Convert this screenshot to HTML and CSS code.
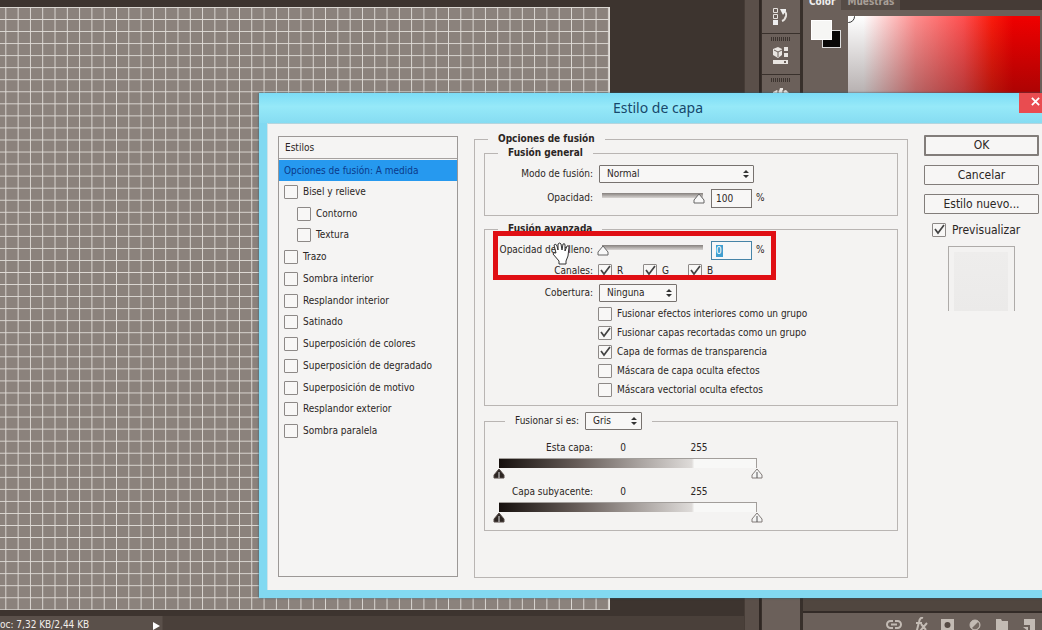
FILE: index.html
```html
<!DOCTYPE html>
<html lang="es">
<head>
<meta charset="utf-8">
<title>Estilo de capa</title>
<link rel="stylesheet" href="styles.css">
</head>
<body>
<div class="app">
  <main class="workspace">
    <div class="stage"><div class="canvas"></div></div>
    <footer class="status"><span class="doc-size">oc: 7,32 KB/2,44 KB</span><span class="play"></span></footer>
  </main>
  <div class="scrollbar"></div>
  <nav class="dock">
    <button class="dock-cell" aria-label="Historia">
      <svg width="18" height="20" viewBox="0 0 18 20"><g fill="none" stroke="#e6e2de"><path d="M1.500 2.500h4v4h-4zM1.500 8.500h4v4h-4z"/><path d="M10 5q5 0 4 5-1 4-4 5" stroke-width="2"/></g><path d="M1 14h5v5H1zM8 3h6v2l-3 4z" fill="#eee"/></svg>
    </button>
    <button class="dock-cell" aria-label="Propiedades">
      <svg width="18" height="20" viewBox="0 0 18 20"><path d="M1 4l5-2 4 2v6l-4 3-5-3z" fill="#e9e5e1"/><path d="M2 5l4 2 4-2M6 7v5" stroke="#6b605a" fill="none"/><path d="M12 2h4v4h-4zM12 8h4v4h-4zM1 15h15v4H1z" fill="#e9e5e1"/><path d="M12 16h2v2h-2z" fill="#6b605a"/></svg>
    </button>
    <button class="dock-cell" aria-label="Pinceles">
      <svg width="18" height="20" viewBox="0 0 18 20"><path d="M1 6l4-2 2 1 1-3h3v3l3-1 3 3v8H1z" fill="#e9e5e1"/><path d="M6 4v6M11 4v6" stroke="#6b605a"/></svg>
    </button>
  </nav>
  <aside class="panels">
    <div class="tabs"><button class="tab tab-on">Color</button><button class="tab">Muestras</button></div>
    <div class="color-body">
      <div class="swatches"><span class="swatch back"></span><span class="swatch front"></span></div>
      <div class="ramp"><span class="picker"></span></div>
    </div>
    <div class="layers"></div>
    <div class="layer-tools">
      <svg width="16" height="16" viewBox="0 0 16 16"><path d="M7 4H4.500a3.500 3.500 0 0 0 0 7H7M9 4h2.500a3.500 3.500 0 0 1 0 7H9M5 7.500h6" fill="none" stroke="#c3bbb4" stroke-width="2"/></svg>
      <svg width="16" height="16" viewBox="0 0 16 16"><path d="M10 1Q7 0 6 5L4 13q-1 2-3 1M3 6h6M8 7l5 6M14 6l-7 8" fill="none" stroke="#c3bbb4" stroke-width="2"/></svg>
      <svg width="16" height="16" viewBox="0 0 16 16"><path d="M1 2h13v12H1z" fill="#c3bbb4"/><circle cx="7.500" cy="8" r="3" fill="#554a44"/></svg>
      <svg width="16" height="16" viewBox="0 0 16 16"><circle cx="8" cy="8" r="5" fill="#c3bbb4" stroke="#c3bbb4"/><path d="M5 11A4 4 0 0 0 11 5z" fill="#756a63"/></svg>
      <svg width="16" height="16" viewBox="0 0 16 16"><path d="M2 2h5l1 2h6v10H2z" fill="#c3bbb4"/></svg>
      <svg width="16" height="16" viewBox="0 0 16 16"><path d="M3 2h11v12H9V8H3z" fill="#c3bbb4"/><path d="M2 10h5v4z" fill="#c3bbb4"/></svg>
    </div>
  </aside>
</div>

<section class="dialog" role="dialog" aria-labelledby="dlg-title">
  <header class="titlebar">
    <h1 id="dlg-title">Estilo de capa</h1>
    <button class="close" aria-label="Cerrar"><svg width="9" height="9" viewBox="0 0 10 10"><path d="M1 1l8 8M9 1L1 9" stroke="#fff" stroke-width="2"/></svg></button>
  </header>
  <div class="dialog-body">
    <div class="styles">
      <h2 class="styles-head">Estilos</h2>
      <button class="selected">Opciones de fusión: A medida</button>
      <div class="style-list">
        <label><input type="checkbox">Bisel y relieve</label>
        <label class="sub"><input type="checkbox">Contorno</label>
        <label class="sub"><input type="checkbox">Textura</label>
        <label><input type="checkbox">Trazo</label>
        <label><input type="checkbox">Sombra interior</label>
        <label><input type="checkbox">Resplandor interior</label>
        <label><input type="checkbox">Satinado</label>
        <label><input type="checkbox">Superposición de colores</label>
        <label><input type="checkbox">Superposición de degradado</label>
        <label><input type="checkbox">Superposición de motivo</label>
        <label><input type="checkbox">Resplandor exterior</label>
        <label><input type="checkbox">Sombra paralela</label>
      </div>
    </div>

    <fieldset class="options">
      <legend>Opciones de fusión</legend>
      <fieldset class="group general">
        <legend>Fusión general</legend>
        <div class="row mode-row">
          <label class="name" for="mode">Modo de fusión:</label>
          <select id="mode" class="wide"><option>Normal</option></select>
        </div>
        <div class="row">
          <label class="name" for="opacity">Opacidad:</label>
          <input id="opacity" type="range" value="100">
          <input class="num" type="text" value="100" aria-label="Opacidad en porcentaje"><span>%</span>
        </div>
      </fieldset>

      <fieldset class="group advanced">
        <legend>Fusión avanzada</legend>
        <div class="fill-block">
          <div class="row fill-row">
            <label class="name" for="fill">Opacidad de relleno:</label>
            <input id="fill" type="range" value="0">
            <input class="num active" type="text" value="0" aria-label="Relleno en porcentaje"><span>%</span>
          </div>
          <div class="row channels">
            <span class="name">Canales:</span>
            <label><input type="checkbox" checked>R</label>
            <label><input type="checkbox" checked>G</label>
            <label><input type="checkbox" checked>B</label>
          </div>
          <svg class="hand" width="22" height="24" viewBox="0 0 22 24"><path d="M3 4q2-2 3 1l1 4V3q2-2 3 0l1 6 1-6q2-1 2 1v6l2-5q2-1 2 1l-1 9-2 5v3H8v-3l-6-7q0-2 3-1z" fill="#fff" stroke="#333"/></svg>
          <div class="marker"></div>
        </div>
        <div class="row knockout">
          <label class="name" for="knock">Cobertura:</label>
          <select id="knock" class="mid"><option>Ninguna</option></select>
        </div>
        <div class="checks">
          <label><input type="checkbox">Fusionar efectos interiores como un grupo</label>
          <label><input type="checkbox" checked>Fusionar capas recortadas como un grupo</label>
          <label><input type="checkbox" checked>Capa de formas de transparencia</label>
          <label><input type="checkbox">Máscara de capa oculta efectos</label>
          <label><input type="checkbox">Máscara vectorial oculta efectos</label>
        </div>
      </fieldset>

      <fieldset class="group blend-if">
        <legend><label for="gray">Fusionar si es:</label><select id="gray" class="small"><option>Gris</option></select></legend>
        <div class="levels">
          <div class="level-text"><span class="name">Esta capa:</span><span class="low">0</span><span class="high">255</span></div>
          <div class="bar"></div>
          <div class="stops">
            <svg width="12" height="11" viewBox="0 0 12 11"><path d="M6 1l5 6v3H1V7z" fill="#2c2522" stroke="#544a46"/><path d="M6 4v6" stroke="#ddd"/></svg>
            <svg width="12" height="11" viewBox="0 0 12 11"><path d="M6 1l5 6v3H1V7z" fill="#f4f4f4" stroke="#817b78"/><path d="M6 4v6" stroke="#555"/></svg>
          </div>
        </div>
        <div class="levels">
          <div class="level-text"><span class="name">Capa subyacente:</span><span class="low">0</span><span class="high">255</span></div>
          <div class="bar"></div>
          <div class="stops">
            <svg width="12" height="11" viewBox="0 0 12 11"><path d="M6 1l5 6v3H1V7z" fill="#2c2522" stroke="#544a46"/><path d="M6 4v6" stroke="#ddd"/></svg>
            <svg width="12" height="11" viewBox="0 0 12 11"><path d="M6 1l5 6v3H1V7z" fill="#f4f4f4" stroke="#817b78"/><path d="M6 4v6" stroke="#555"/></svg>
          </div>
        </div>
      </fieldset>
    </fieldset>

    <div class="actions">
      <button class="btn primary">OK</button>
      <button class="btn">Cancelar</button>
      <button class="btn">Estilo nuevo...</button>
      <label class="preview-toggle"><input type="checkbox" checked>Previsualizar</label>
      <div class="preview"></div>
    </div>
  </div>
</section>
</body>
</html>
```
FILE: styles.css
```css
* { box-sizing: border-box; }

body {
  margin: 0;
  height: 100vh;
  overflow: hidden;
  position: relative;
  font: 10px/14px "DejaVu Sans Condensed", "DejaVu Sans", sans-serif;
  color: #2b2624;
  background: #3c332e;
}

button, input, select { font: inherit; color: inherit; margin: 0; }
button { border: 0; background: none; padding: 0; }

/* Application behind the dialog */
.app { display: flex; height: 100%; }
.workspace { flex: 1; min-width: 0; display: flex; flex-direction: column; }
.stage { flex: 1; min-height: 0; padding-top: 7px; overflow: hidden; background: #3d342f; }
.canvas {
  width: 616px;
  height: 603px;
  margin-left: -6px;
  background-color: #8b827c;
  background-image:
    linear-gradient(to left, #dedad5 1px, transparent 1px),
    linear-gradient(to bottom, #dedad5 1px, transparent 1px);
  background-size: 2% 2%;
  border-right: 1px solid #e2dfda;
}
.status {
  height: 14px;
  display: flex;
  align-items: center;
  background: linear-gradient(to right, #5a504a 162px, #4a403a 163px);
  color: #f2eeea;
}
.doc-size { width: 153px; white-space: nowrap; padding-top: 4px; }
.play { border: 4px solid transparent; border-left: 7px solid #fff; border-right: 0; margin-top: 6px; }
.scrollbar { width: 17px; background: #5a4f49; border-left: 1px solid #463c36; border-right: 2px solid #2f2723; }
.dock {
  width: 42px;
  background: #6b605a;
  border-left: 1px solid #38302b;
  border-right: 3px solid #38302b;
  display: flex;
  flex-direction: column;
}
.dock-cell {
  height: 41px;
  flex: none;
  display: flex;
  justify-content: center;
  align-items: flex-start;
  padding-top: 11px;
  border-bottom: 1px solid #39312c;
  background: repeating-linear-gradient(to right, #3c342f 0 1px, transparent 1px 2px) 9px 3px / 20px 4px no-repeat;
}
.dock-cell:first-child { height: 34px; padding-top: 6px; background: none; }
.panels { width: 239px; display: flex; flex-direction: column; background: #6b605a; }
.tabs { height: 10px; display: flex; overflow: hidden; background: #453b36; }
.tab { height: 10px; line-height: 4px; padding: 0 6px 6px; background: #564c46; color: #a89f98; font-weight: bold; }
.tab-on { background: #6b605a; color: #eee; }
.color-body { display: flex; padding: 6px 2px 0 8px; gap: 7px; height: 90px; }
.swatches { width: 30px; height: 36px; position: relative; }
.swatch { position: absolute; border: 1px solid #ddd; }
.front { left: 0; top: 4px; width: 21px; height: 20px; background: #f6f6f4; border-color: #fff; }
.back { left: 11px; top: 14px; width: 19px; height: 18px; background: #090807; }
.ramp {
  flex: 1;
  position: relative;
  overflow: hidden;
  background:
    linear-gradient(to bottom, transparent, rgba(30, 10, 10, 0.35)),
    linear-gradient(to right, #fff 8%, #ff8f8f 35%, #ff5050 60%, #fb1a0c 75%, #f00000 86%);
}
.picker { position: absolute; left: -6px; top: -6px; width: 13px; height: 13px; border: 1px solid #333; border-radius: 50%; }
.layers { flex: 1; background: #50463f; border-bottom: 2px solid #332b27; }
.layer-tools { height: 17px; display: flex; justify-content: flex-end; gap: 11px; padding: 4px 5px 0 0; overflow: hidden; }
.layer-tools svg { flex: none; }

/* Dialog window */
.dialog {
  position: absolute;
  left: 259px;
  top: 93px;
  right: 0;
  bottom: 32px;
  display: flex;
  flex-direction: column;
  border: solid #82d9f1;
  border-width: 0 0 8px 8px;
  box-shadow: 0 0 2px #26576a;
  background: #f4f3f2;
}
.titlebar {
  flex: none;
  height: 30px;
  margin-left: -8px;
  display: flex;
  background: linear-gradient(to bottom, #7cdcf6, #96e9f8 45%, #86dcf2);
}
.titlebar h1 {
  flex: 1;
  margin: 0 0 0 38px;
  text-align: center;
  font: 14px/30px "Noto Sans", sans-serif;
  color: #17486c;
}
.close { width: 23px; height: 20px; background: #e94c50; padding-left: 9px; }
.dialog-body { flex: 1; min-height: 0; display: flex; padding: 8px 3px 12px 10px; border-top: 1px solid #b5d5de; border-left: 1px solid #cfe3e8; }

input[type="checkbox"] {
  appearance: none;
  flex: none;
  width: 14px;
  height: 14px;
  border: 1px solid #8d8987;
  border-radius: 1px;
  background: #f8f7f6;
}
input[type="checkbox"]:checked {
  background: #f8f7f6 url("data:image/svg+xml,%3Csvg xmlns='http://www.w3.org/2000/svg' viewBox='0 0 12 12'%3E%3Cpath d='M2 5l3 4 6-8' fill='none' stroke='%23444' stroke-width='1.7'/%3E%3C/svg%3E") center / 12px 12px no-repeat;
}

.styles { width: 180px; flex: none; margin: 4px 16px 1px 0; border: 1px solid #9c9896; background: #f5f4f3; }
.styles-head { margin: 0 0 1px; padding: 0 6px; font-size: 10px; line-height: 21px; font-weight: normal; border-bottom: 1px solid #a5a19f; }
.selected { display: block; width: 100%; height: 21px; padding: 0 5px; text-align: left; background: #2699ef; color: #0b3a8a; }
.style-list { display: grid; grid-auto-rows: 1fr; height: 261px; padding-left: 5px; }
.style-list label { display: flex; align-items: center; gap: 5px; }
.style-list .sub { padding-left: 13px; }

fieldset { margin: 0; min-width: 0; border: 1px solid #b9b5b3; }
legend { font-weight: bold; padding: 0 10px; height: 14px; white-space: nowrap; }
.options { flex: 1; padding: 0 9px; }
.options > legend { margin-left: 4px; }
.group { padding: 0; }
.group > legend { margin-left: 13px; }
.row { display: flex; align-items: center; height: 20px; }
.name { width: 108px; flex: none; text-align: right; margin-right: 6px; white-space: nowrap; }
.general { padding-bottom: 7px; }
.mode-row { height: 28px; }
.advanced { margin-top: 6px; padding-bottom: 4px; }
.fill-block { position: relative; }
.fill-row { height: 28px; }
.channels { height: 14px; }
.channels label { display: flex; align-items: center; gap: 5px; width: 45px; }
.channels .name { margin-right: 5px; }
.knockout { height: 26px; padding-top: 4px; }
.hand { position: absolute; left: 66px; top: 5px; }
.marker { position: absolute; left: 8px; top: -5px; width: 283px; bottom: -2px; border: 5px solid #e00f14; }
.checks { display: flex; flex-direction: column; padding: 0 0 2px 113px; }
.checks label { display: flex; align-items: center; gap: 5px; height: 19px; }

select {
  appearance: none;
  height: 18px;
  padding: 0 7px;
  border: 1px solid #77726f;
  border-radius: 1px;
  background: #f8f7f6 url("data:image/svg+xml,%3Csvg xmlns='http://www.w3.org/2000/svg' viewBox='0 0 6 8'%3E%3Cpath d='M0 3l3-3 3 3zM0 5l3 3 3-3z' fill='%23333'/%3E%3C/svg%3E") right 4px center / 6px 8px no-repeat;
}
.wide { width: 155px; }
.mid { width: 78px; }
.small { width: 57px; }

input[type="range"] { appearance: none; width: 108px; height: 14px; background: none; margin-right: 4px; }
input[type="range"]::-webkit-slider-runnable-track {
  height: 14px;
  background: linear-gradient(#85807d, #d8d5d3) 3px 2px / 101px 5px no-repeat;
}
input[type="range"]::-webkit-slider-thumb {
  appearance: none;
  width: 12px;
  height: 11px;
  margin-top: 2px;
  margin-left: -2px;
  background: url("data:image/svg+xml,%3Csvg xmlns='http://www.w3.org/2000/svg' viewBox='0 0 12 11'%3E%3Cpath d='M6 1l5 6v3H1V7z' fill='%23f8f8f8' stroke='%23666'/%3E%3C/svg%3E") no-repeat;
}
.num { width: 41px; height: 19px; padding: 0 4px; margin-right: 4px; border: 1px solid #77726f; background: #f8f7f6; }
.active { border: 1px solid #4684a8; color: #fff; background: linear-gradient(#3f9fd0, #3f9fd0) 4px 3px / 7px 12px no-repeat #f6f7f8; }

.blend-if { margin-top: 6px; padding-bottom: 12px; }
.blend-if legend { display: flex; align-items: center; gap: 6px; height: 18px; font-weight: normal; margin-left: 20px; }
.levels { margin-left: 14px; width: 258px; height: 44px; padding-top: 11px; }
.level-text { display: flex; height: 17px; }
.level-text .name { width: 94px; margin-right: 24px; }
.low { width: 12px; text-align: center; }
.high { margin-left: 55px; width: 30px; text-align: center; }
.bar {
  height: 10px;
  border: solid #a29e9b;
  border-width: 1px 1px 0 0;
  background: linear-gradient(to right, #16100e, #655b57 30%, #aaa4a1 55%, #dedbd9 75%, #f8f8f7 76%);
}
.stops { display: flex; justify-content: space-between; margin: 0 -6px; }

.actions { width: 115px; flex: none; margin-left: 16px; display: flex; flex-direction: column; gap: 9px; padding-top: 3px; }
.btn { height: 20px; border: 1px solid #827d7a; border-radius: 1px; background: #f7f6f5; font-size: 12px; line-height: 18px; }
.primary { height: 21px; border-width: 2px; line-height: 17px; }
.preview-toggle { display: flex; align-items: center; gap: 6px; padding-left: 8px; font-size: 12px; line-height: 14px; }
.preview { width: 67px; height: 65px; margin-left: 24px; border: 1px solid #aeaba9; border-bottom: 0; background: linear-gradient(#eeedec, #ebeae9) 5px 5px / 54px 59px no-repeat #f3f2f1; }
```
